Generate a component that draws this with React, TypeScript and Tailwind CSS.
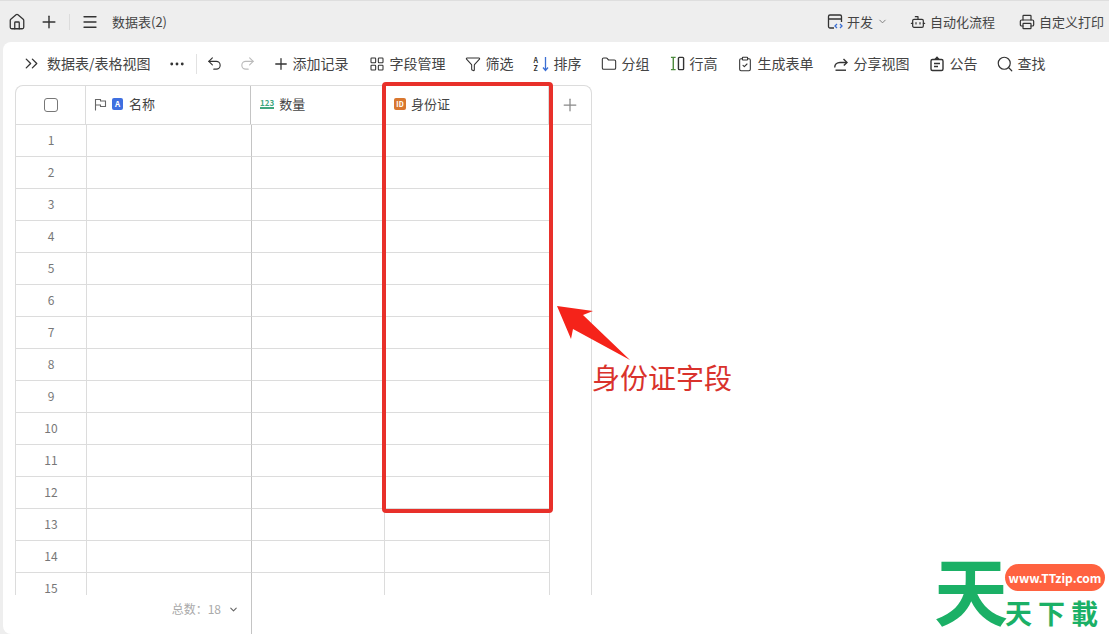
import { Bot, ChevronDown, ChevronsRight, ClipboardCheck, Ellipsis, Folder, Funnel, House, LayoutGrid, Menu, Plus, Printer, Redo2, Search, Undo2 } from "lucide-react";
import type { ReactNode } from "react";

const FONT = "font-['Microsoft_YaHei','Noto_Sans_CJK_SC','Liberation_Sans',sans-serif]";

function ShareIcon() {
  return (
    <svg className="shrink-0" width="16" height="16" viewBox="0 0 16 16" fill="none" stroke="#333" strokeWidth="1.4">
      <path d="M1.700 11.500C1.700 8.500 4 6.500 7 6.500h6.500" />
      <path d="M10.500 3l3.500 3.500L10.800 9.500" />
      <path d="M2.500 14.200h10.500" />
    </svg>
  );
}

function NoticeIcon() {
  return (
    <svg className="shrink-0" width="16" height="16" viewBox="0 0 16 16" fill="none" stroke="#333" strokeWidth="1.4">
      <rect x="2" y="3.500" width="12" height="11" rx="1.500" />
      <path d="M6 3.500L8 1.300l2 2.200" fill="#333" />
      <path d="M5 7.500h6M5 10.500h4" />
    </svg>
  );
}

function SortIcon() {
  return (
    <span className="relative flex h-[16px] w-[15px] shrink-0 flex-col text-[7px] font-bold leading-[8px] text-[#333]">
      <span>A</span>
      <span>Z</span>
      <svg className="absolute right-0 top-0" width="7" height="16" viewBox="0 0 7 16" fill="none" stroke="#3b6fd4" strokeWidth="1.300">
        <path d="M3.500 1v13M1 11.500l2.500 3 2.500-3" />
      </svg>
    </span>
  );
}

function RowHeightIcon() {
  return (
    <svg className="shrink-0" width="15" height="15" viewBox="0 0 16 16" fill="none" strokeWidth="1.5">
      <path d="M1 1.500h5M1 14.500h5M3.500 1.500v13" stroke="#4d8a3d" />
      <rect x="9" y="1.500" width="5.500" height="13" rx="1" stroke="#333" />
    </svg>
  );
}

function DevIcon() {
  return (
    <svg className="shrink-0" width="17" height="17" viewBox="0 0 17 17" fill="none" strokeWidth="1.3">
      <path d="M7 15H3a1.500 1.500 0 0 1-1.500-1.500v-10A1.500 1.500 0 0 1 3 2h10a1.500 1.500 0 0 1 1.500 1.500V9M1.500 6h13" stroke="#333" />
      <path d="M10 11l-2 2 2 2M13 11l2 2-2 2" stroke="#3b6fd4" />
    </svg>
  );
}

function FlagIcon() {
  return (
    <svg className="shrink-0" width="13" height="13" viewBox="0 0 13 13" fill="none" stroke="#666" strokeWidth="1.1">
      <path d="M1.500 12.500V1.500h5v1.500h5v5.500h-5V7h-5" />
    </svg>
  );
}

function ToolItem({ icon, label, className = "" }: { icon: ReactNode; label: string; className?: string }) {
  return (
    <div className={`flex items-center gap-[5px] ${className}`}>
      <span className="flex w-[15px] justify-center">{icon}</span>
      <span className="whitespace-nowrap">{label}</span>
    </div>
  );
}

function Row({ n }: { n: number }) {
  return (
    <div className="flex h-[32px] shrink-0">
      <div className="flex w-[71px] items-center justify-center border-b border-r border-[#dcdcdc] pb-[2px] text-[12px] text-[#777]">{n}</div>
      <div className="w-[165px] border-b border-r border-b-[#dcdcdc] border-r-[#c4c4c4]" />
      <div className="w-[133px] border-b border-r border-[#dcdcdc]" />
      <div className="w-[165px] border-b border-r border-[#dcdcdc]" />
    </div>
  );
}

export default function App() {
  const rows = Array.from({ length: 15 }, (_, i) => i + 1);
  const icon = { size: 16, strokeWidth: 1.6, color: "#333", className: "shrink-0" };

  return (
    <div className={`${FONT} relative flex h-[634px] w-[1109px] flex-col overflow-hidden bg-[#eeeeee] text-[#444]`}>
      {/* Top bar */}
      <div className="flex h-[42px] shrink-0 items-center border-t border-[#dedede] pl-[8px] pr-[5px] text-[13px]">
        <House size={18} strokeWidth={1.7} color="#333" />
        <Plus size={20} strokeWidth={1.7} color="#333" className="ml-[13px]" />
        <div className="ml-[10px] h-[16px] w-px bg-[#dcdcdc]" />
        <Menu size={18} strokeWidth={1.7} color="#333" className="ml-[11px]" />
        <span className="ml-[13px]">数据表(2)</span>
        <div className="ml-auto flex items-center gap-[3px]">
          <DevIcon />
          <span>开发</span>
          <ChevronDown size={11} color="#777" className="ml-[1px]" />
        </div>
        <div className="ml-[22px] flex items-center gap-[4px]">
          <Bot size={16} strokeWidth={1.8} color="#333" />
          <span>自动化流程</span>
        </div>
        <div className="ml-[24px] flex items-center gap-[4px]">
          <Printer size={16} strokeWidth={1.8} color="#333" />
          <span>自定义打印</span>
        </div>
      </div>

      {/* Panel */}
      <div className="ml-[3px] flex min-h-0 flex-1 flex-col rounded-l-lg bg-white">
        {/* Toolbar */}
        <div className="flex h-[43px] shrink-0 items-center gap-[20px] pl-[18px] text-[14px]">
          <div className="flex items-center gap-[5px]">
            <ChevronsRight size={21} strokeWidth={1.5} color="#333" className="shrink-0" />
            <span className="whitespace-nowrap">数据表/表格视图</span>
            <Ellipsis size={18} strokeWidth={1.8} color="#333" className="ml-[12px] shrink-0" />
            <div className="ml-[5px] h-[20px] w-px bg-[#e2e2e2]" />
          </div>
          <div className="-ml-[11px] flex items-center gap-[16px]">
            <Undo2 size={17} strokeWidth={1.6} color="#333" />
            <Redo2 size={17} strokeWidth={1.6} color="#bbb" />
          </div>
          <div className="-ml-[4px] flex items-center gap-[3px]">
            <Plus size={18} strokeWidth={1.7} color="#333" />
            <span className="whitespace-nowrap">添加记录</span>
          </div>
          <ToolItem icon={<LayoutGrid {...icon} />} label="字段管理" className="ml-[1px]" />
          <ToolItem icon={<Funnel {...icon} />} label="筛选" />
          <ToolItem icon={<SortIcon />} label="排序" />
          <ToolItem icon={<Folder {...icon} />} label="分组" />
          <ToolItem icon={<RowHeightIcon />} label="行高" />
          <ToolItem icon={<ClipboardCheck {...icon} />} label="生成表单" />
          <ToolItem icon={<ShareIcon />} label="分享视图" />
          <ToolItem icon={<NoticeIcon />} label="公告" />
          <ToolItem icon={<Search size={18} strokeWidth={1.6} color="#333" className="shrink-0" />} label="查找" />
        </div>

        {/* Table */}
        <div className="ml-[12px] flex h-[510px] w-[577px] shrink-0 flex-col overflow-hidden rounded-t-lg border-l border-r border-t border-[#dcdcdc]">
          <div className="flex h-[39px] shrink-0 border-b border-[#dcdcdc] text-[13px]">
            <div className="flex w-[70px] items-center justify-center border-r border-[#dcdcdc]">
              <span className="h-[14px] w-[14px] rounded-[3px] border border-[#777]" />
            </div>
            <div className="flex w-[165px] items-center border-r border-[#c4c4c4] pb-[2px] pl-[8px]">
              <FlagIcon />
              <span className="ml-[5px] flex h-[12px] w-[11px] items-center justify-center rounded-[2px] bg-[#3f6fe0] text-[8px] font-bold text-white">A</span>
              <span className="ml-[6px]">名称</span>
            </div>
            <div className="flex w-[133px] items-center border-r border-[#dcdcdc] pb-[2px] pl-[9px]">
              <span className="border-b-2 border-[#3fa77f] text-[8px] font-bold leading-[8px] text-[#3fa77f]">123</span>
              <span className="ml-[5px]">数量</span>
            </div>
            <div className="flex w-[165px] items-center border-r border-[#dcdcdc] pb-[2px] pl-[10px]">
              <span className="flex h-[12px] w-[12px] items-center justify-center rounded-[2px] bg-[#d9772f] text-[7px] font-bold text-white">ID</span>
              <span className="ml-[5px]">身份证</span>
            </div>
            <div className="flex flex-1 items-center justify-center">
              <Plus size={20} strokeWidth={1.5} color="#888" />
            </div>
          </div>
          {rows.map((n) => (
            <Row key={n} n={n} />
          ))}
        </div>

        {/* Footer */}
        <div className="ml-[12px] flex w-[237px] flex-1 items-start justify-end border-r border-[#c4c4c4] pr-[12px] pt-[5px] text-[12px] text-[#aaa]">
          <span>总数：</span>
          <span>18</span>
          <ChevronDown size={11} strokeWidth={2.4} color="#666" className="ml-[7px] mt-[4px]" />
        </div>
      </div>

      {/* Annotation */}
      <div className="absolute left-[382px] top-[82px] h-[431px] w-[171px] rounded-[4px] border-[4px] border-[#e8302a]" />
      <svg className="absolute left-[550px] top-[300px]" width="90" height="70" viewBox="0 0 90 70">
        <path d="M7 6L43 11L33 15L80 60L23 29L21 39Z" fill="#f5231a" />
      </svg>
      <div className="absolute left-[592px] top-[357px] whitespace-nowrap text-[28px] leading-[40px] text-[#d9322c]">身份证字段</div>

      {/* Watermark */}
      <div className="absolute left-[935px] top-[552px] h-[82px] w-[174px] bg-white">
        <span className="absolute left-[70px] top-[12px] flex h-[27px] w-[100px] items-center justify-center rounded-full bg-[#ff6240] text-[12px] font-bold text-white">www.TTzip.com</span>
        <span className="absolute left-[70px] top-[45px] whitespace-nowrap text-[27px] font-bold leading-[32px] tracking-[6px] text-[#1bb066]">天下載</span>
        <span className="absolute -left-px top-[-5px] text-[74px] font-bold leading-[82px] text-[#1bb066]">天</span>
      </div>
    </div>
  );
}
